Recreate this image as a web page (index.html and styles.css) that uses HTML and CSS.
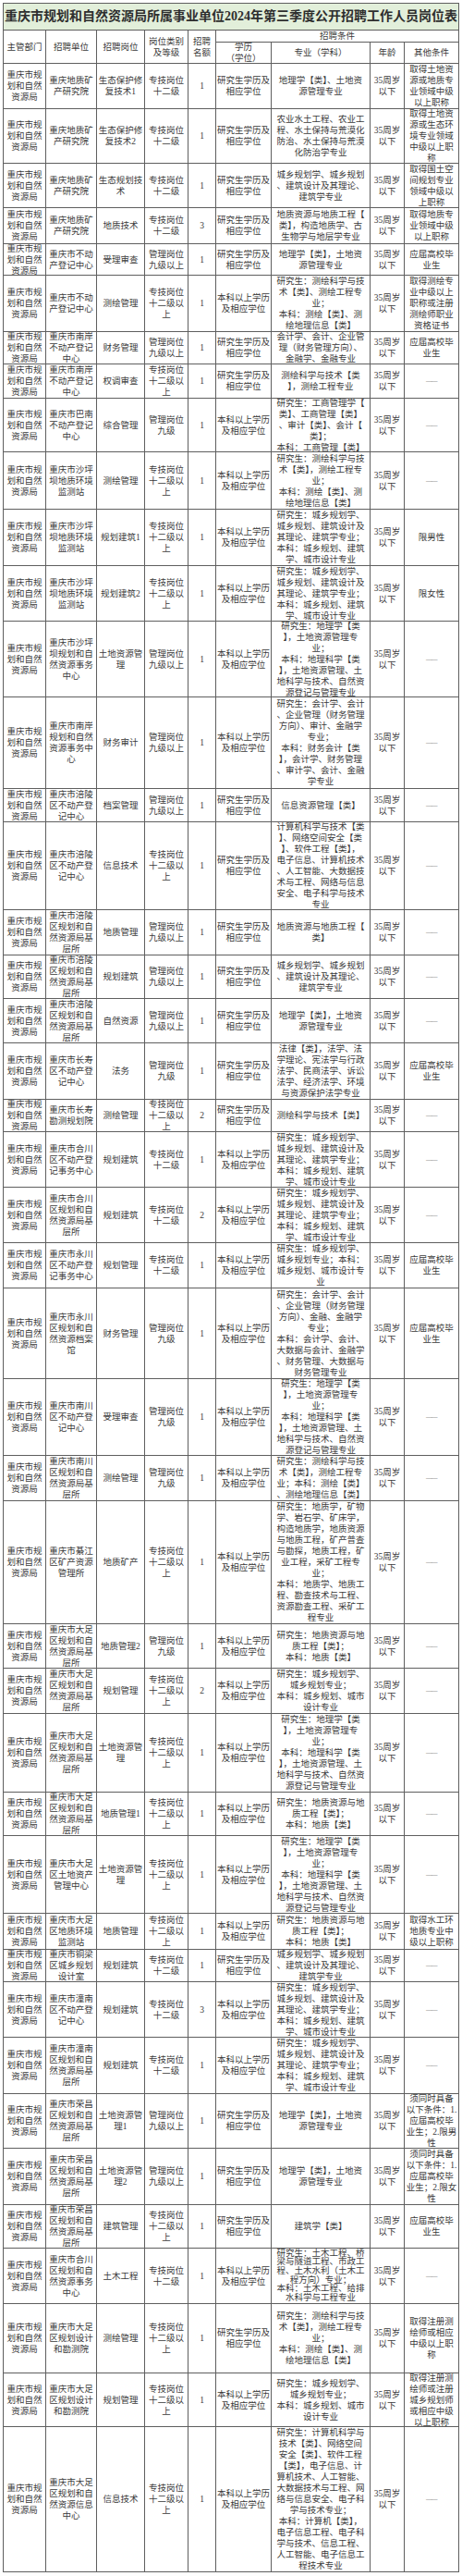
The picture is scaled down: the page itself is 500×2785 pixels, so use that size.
FILE: index.html
```html
<!DOCTYPE html>
<html lang="zh-CN">
<head>
<meta charset="utf-8">
<title>岗位表</title>
<link rel="stylesheet" href="styles.css">
</head>
<body>
<div class="sheet">
<div class="c title">重庆市规划和自然资源局所属事业单位2024年第三季度公开招聘工作人员岗位表</div>
<div class="c span2">主管部门</div>
<div class="c span2">招聘单位</div>
<div class="c span2">招聘岗位</div>
<div class="c span2">岗位类别及等级</div>
<div class="c span2">招聘名额</div>
<div class="c span4">招聘条件</div>
<div class="c nw"><span>学历<br>（学位）</span></div>
<div class="c">专业（学科）</div>
<div class="c">年龄</div>
<div class="c">其他条件</div>

<div class="c">重庆市规划和自然资源局</div><div class="c">重庆地质矿产研究院</div><div class="c">生态保护修复技术1</div><div class="c">专技岗位十二级</div><div class="c">1</div><div class="c">研究生学历及相应学位</div><div class="c nw"><span>地理学【类】、土地资<br>源管理专业</span></div><div class="c">35周岁以下</div><div class="c nw"><span>取得土地资<br>源或地质专<br>业领域中级<br>以上职称</span></div>

<div class="c">重庆市规划和自然资源局</div><div class="c">重庆地质矿产研究院</div><div class="c">生态保护修复技术2</div><div class="c">专技岗位十二级</div><div class="c">1</div><div class="c">研究生学历及相应学位</div><div class="c nw"><span>农业水土工程、农业工<br>程、水土保持与荒漠化<br>防治、水土保持与荒漠<br>化防治学专业</span></div><div class="c">35周岁以下</div><div class="c nw"><span>取得土地资<br>源或生态环<br>境专业领域<br>中级以上职<br>称</span></div>

<div class="c">重庆市规划和自然资源局</div><div class="c">重庆地质矿产研究院</div><div class="c">生态规划技术</div><div class="c">专技岗位十二级</div><div class="c">1</div><div class="c">研究生学历及相应学位</div><div class="c nw"><span>城乡规划学、城乡规划<br>、建筑设计及其理论、<br>建筑学专业</span></div><div class="c">35周岁以下</div><div class="c nw"><span>取得国土空<br>间规划专业<br>领域中级以<br>上职称</span></div>

<div class="c">重庆市规划和自然资源局</div><div class="c">重庆地质矿产研究院</div><div class="c">地质技术</div><div class="c">专技岗位十二级</div><div class="c">3</div><div class="c">研究生学历及相应学位</div><div class="c nw"><span>地质资源与地质工程【<br>类】，构造地质学、古<br>生物学与地层学专业</span></div><div class="c">35周岁以下</div><div class="c nw"><span>取得地质专<br>业领域中级<br>以上职称</span></div>

<div class="c">重庆市规划和自然资源局</div><div class="c">重庆市不动产登记中心</div><div class="c">受理审查</div><div class="c">管理岗位九级以上</div><div class="c">1</div><div class="c">研究生学历及相应学位</div><div class="c nw"><span>地理学【类】，土地资<br>源管理专业</span></div><div class="c">35周岁以下</div><div class="c nw"><span>应届高校毕<br>业生</span></div>

<div class="c">重庆市规划和自然资源局</div><div class="c">重庆市不动产登记中心</div><div class="c">测绘管理</div><div class="c">专技岗位十二级以上</div><div class="c">1</div><div class="c">本科以上学历及相应学位</div><div class="c nw"><span>研究生：测绘科学与技<br>术【类】、测绘工程专<br>业；<br>本科：测绘【类】、测<br>绘地理信息【类】</span></div><div class="c">35周岁以下</div><div class="c nw"><span>取得测绘专<br>业中级以上<br>职称或注册<br>测绘师职业<br>资格证书</span></div>

<div class="c">重庆市规划和自然资源局</div><div class="c">重庆市南岸不动产登记中心</div><div class="c">财务管理</div><div class="c">管理岗位九级以上</div><div class="c">1</div><div class="c">研究生学历及相应学位</div><div class="c nw"><span>会计学、会计、企业管<br>理（财务管理方向）、<br>金融学、金融专业</span></div><div class="c">35周岁以下</div><div class="c nw"><span>应届高校毕<br>业生</span></div>

<div class="c">重庆市规划和自然资源局</div><div class="c">重庆市南岸不动产登记中心</div><div class="c">权调审查</div><div class="c">专技岗位十二级以上</div><div class="c">1</div><div class="c">研究生学历及相应学位</div><div class="c nw"><span>测绘科学与技术【类<br>】，测绘工程专业</span></div><div class="c">35周岁以下</div><div class="c"><span class="dash">——</span></div>

<div class="c">重庆市规划和自然资源局</div><div class="c">重庆市巴南不动产登记中心</div><div class="c">综合管理</div><div class="c">管理岗位九级</div><div class="c">1</div><div class="c">本科以上学历及相应学位</div><div class="c nw"><span>研究生：工商管理学【<br>类】、工商管理【类】<br>、审计【类】、会计【<br>类】；<br>本科：工商管理【类】</span></div><div class="c">35周岁以下</div><div class="c"><span class="dash">——</span></div>

<div class="c">重庆市规划和自然资源局</div><div class="c">重庆市沙坪坝地质环境监测站</div><div class="c">测绘管理</div><div class="c">专技岗位十二级以上</div><div class="c">1</div><div class="c">本科以上学历及相应学位</div><div class="c nw"><span>研究生：测绘科学与技<br>术【类】，测绘工程专<br>业；<br>本科：测绘【类】、测<br>绘地理信息【类】</span></div><div class="c">35周岁以下</div><div class="c"><span class="dash">——</span></div>

<div class="c">重庆市规划和自然资源局</div><div class="c">重庆市沙坪坝地质环境监测站</div><div class="c">规划建筑1</div><div class="c">专技岗位十二级以上</div><div class="c">1</div><div class="c">本科以上学历及相应学位</div><div class="c nw"><span>研究生：城乡规划学、<br>城乡规划、建筑设计及<br>其理论、建筑学专业；<br>本科：城乡规划、建筑<br>学、城市设计专业</span></div><div class="c">35周岁以下</div><div class="c">限男性</div>

<div class="c">重庆市规划和自然资源局</div><div class="c">重庆市沙坪坝地质环境监测站</div><div class="c">规划建筑2</div><div class="c">专技岗位十二级以上</div><div class="c">1</div><div class="c">本科以上学历及相应学位</div><div class="c nw"><span>研究生：城乡规划学、<br>城乡规划、建筑设计及<br>其理论、建筑学专业；<br>本科：城乡规划、建筑<br>学、城市设计专业</span></div><div class="c">35周岁以下</div><div class="c">限女性</div>

<div class="c">重庆市规划和自然资源局</div><div class="c">重庆市沙坪坝规划和自然资源事务中心</div><div class="c">土地资源管理</div><div class="c">管理岗位九级以上</div><div class="c">1</div><div class="c">本科以上学历及相应学位</div><div class="c nw"><span>研究生：地理学【类<br>】，土地资源管理专<br>业；<br>本科：地理科学【类<br>】，土地资源管理、土<br>地科学与技术、自然资<br>源登记与管理专业</span></div><div class="c">35周岁以下</div><div class="c"><span class="dash">——</span></div>

<div class="c">重庆市规划和自然资源局</div><div class="c">重庆市南岸规划和自然资源事务中心</div><div class="c">财务审计</div><div class="c">管理岗位九级以上</div><div class="c">1</div><div class="c">本科以上学历及相应学位</div><div class="c nw"><span>研究生：会计学、会计<br>、企业管理（财务管理<br>方向）、审计、金融学<br>专业；<br>本科：财务会计【类<br>】，会计学、财务管理<br>、审计学、会计、金融<br>学专业</span></div><div class="c">35周岁以下</div><div class="c"><span class="dash">——</span></div>

<div class="c">重庆市规划和自然资源局</div><div class="c">重庆市涪陵区不动产登记中心</div><div class="c">档案管理</div><div class="c">管理岗位九级以上</div><div class="c">1</div><div class="c">研究生学历及相应学位</div><div class="c nw"><span>信息资源管理【类】</span></div><div class="c">35周岁以下</div><div class="c"><span class="dash">——</span></div>

<div class="c">重庆市规划和自然资源局</div><div class="c">重庆市涪陵区不动产登记中心</div><div class="c">信息技术</div><div class="c">专技岗位十二级以上</div><div class="c">1</div><div class="c">研究生学历及相应学位</div><div class="c nw"><span>计算机科学与技术【类<br>】、网络空间安全【类<br>】、软件工程【类】，<br>电子信息、计算机技术<br>、人工智能、大数据技<br>术与工程、网络与信息<br>安全、电子科学与技术<br>专业</span></div><div class="c">35周岁以下</div><div class="c"><span class="dash">——</span></div>

<div class="c">重庆市规划和自然资源局</div><div class="c">重庆市涪陵区规划和自然资源局基层所</div><div class="c">地质管理</div><div class="c">管理岗位九级以上</div><div class="c">1</div><div class="c">研究生学历及相应学位</div><div class="c nw"><span>地质资源与地质工程【<br>类】</span></div><div class="c">35周岁以下</div><div class="c"><span class="dash">——</span></div>

<div class="c">重庆市规划和自然资源局</div><div class="c">重庆市涪陵区规划和自然资源局基层所</div><div class="c">规划建筑</div><div class="c">管理岗位九级以上</div><div class="c">1</div><div class="c">研究生学历及相应学位</div><div class="c nw"><span>城乡规划学、城乡规划<br>、建筑设计及其理论、<br>建筑学专业</span></div><div class="c">35周岁以下</div><div class="c"><span class="dash">——</span></div>

<div class="c">重庆市规划和自然资源局</div><div class="c">重庆市涪陵区规划和自然资源局基层所</div><div class="c">自然资源</div><div class="c">管理岗位九级以上</div><div class="c">1</div><div class="c">研究生学历及相应学位</div><div class="c nw"><span>地理学【类】，土地资<br>源管理专业</span></div><div class="c">35周岁以下</div><div class="c"><span class="dash">——</span></div>

<div class="c">重庆市规划和自然资源局</div><div class="c">重庆市长寿区不动产登记中心</div><div class="c">法务</div><div class="c">管理岗位九级</div><div class="c">1</div><div class="c">研究生学历及相应学位</div><div class="c nw"><span>法律【类】，法学、法<br>学理论、宪法学与行政<br>法学、民商法学、诉讼<br>法学、经济法学、环境<br>与资源保护法学专业</span></div><div class="c">35周岁以下</div><div class="c nw"><span>应届高校毕<br>业生</span></div>

<div class="c">重庆市规划和自然资源局</div><div class="c">重庆市长寿勘测规划院</div><div class="c">测绘管理</div><div class="c">专技岗位十二级以上</div><div class="c">2</div><div class="c">研究生学历及相应学位</div><div class="c nw"><span>测绘科学与技术【类】</span></div><div class="c">35周岁以下</div><div class="c"><span class="dash">——</span></div>

<div class="c">重庆市规划和自然资源局</div><div class="c">重庆市合川区不动产登记事务中心</div><div class="c">规划建筑</div><div class="c">专技岗位十二级</div><div class="c">1</div><div class="c">本科以上学历及相应学位</div><div class="c nw"><span>研究生：城乡规划学、<br>城乡规划、建筑设计及<br>其理论、建筑学专业；<br>本科：城乡规划、建筑<br>学、城市设计专业</span></div><div class="c">35周岁以下</div><div class="c"><span class="dash">——</span></div>

<div class="c">重庆市规划和自然资源局</div><div class="c">重庆市合川区规划和自然资源局基层所</div><div class="c">规划建筑</div><div class="c">专技岗位十二级</div><div class="c">2</div><div class="c">本科以上学历及相应学位</div><div class="c nw"><span>研究生：城乡规划学、<br>城乡规划、建筑设计及<br>其理论、建筑学专业；<br>本科：城乡规划、建筑<br>学、城市设计专业</span></div><div class="c">35周岁以下</div><div class="c"><span class="dash">——</span></div>

<div class="c">重庆市规划和自然资源局</div><div class="c">重庆市永川区不动产登记事务中心</div><div class="c">规划管理</div><div class="c">专技岗位十二级</div><div class="c">1</div><div class="c">本科以上学历及相应学位</div><div class="c nw"><span>研究生：城乡规划学、<br>城乡规划专业；本科：<br>城乡规划、城市设计专<br>业</span></div><div class="c">35周岁以下</div><div class="c nw"><span>应届高校毕<br>业生</span></div>

<div class="c">重庆市规划和自然资源局</div><div class="c">重庆市永川区规划和自然资源档案馆</div><div class="c">财务管理</div><div class="c">管理岗位九级</div><div class="c">1</div><div class="c">本科以上学历及相应学位</div><div class="c nw"><span>研究生：会计学、会计<br>、企业管理（财务管理<br>方向）、金融、金融学<br>专业；<br>本科：会计学、会计、<br>大数据与会计、金融学<br>、财务管理、大数据与<br>财务管理专业</span></div><div class="c">35周岁以下</div><div class="c nw"><span>应届高校毕<br>业生</span></div>

<div class="c">重庆市规划和自然资源局</div><div class="c">重庆市南川区不动产登记中心</div><div class="c">受理审查</div><div class="c">管理岗位九级</div><div class="c">1</div><div class="c">本科以上学历及相应学位</div><div class="c nw"><span>研究生：地理学【类<br>】，土地资源管理专<br>业；<br>本科：地理科学【类<br>】，土地资源管理、土<br>地科学与技术、自然资<br>源登记与管理专业</span></div><div class="c">35周岁以下</div><div class="c"><span class="dash">——</span></div>

<div class="c">重庆市规划和自然资源局</div><div class="c">重庆市南川区规划和自然资源局基层所</div><div class="c">测绘管理</div><div class="c">管理岗位九级</div><div class="c">1</div><div class="c">本科以上学历及相应学位</div><div class="c nw"><span>研究生：测绘科学与技<br>术【类】，测绘工程专<br>业；本科：测绘【类】<br>、测绘地理信息【类】</span></div><div class="c">35周岁以下</div><div class="c"><span class="dash">——</span></div>

<div class="c">重庆市规划和自然资源局</div><div class="c">重庆市綦江区矿产资源管理所</div><div class="c">地质矿产</div><div class="c">专技岗位十二级以上</div><div class="c">1</div><div class="c">本科以上学历及相应学位</div><div class="c nw"><span>研究生：地质学，矿物<br>学、岩石学、矿床学，<br>构造地质学，地质资源<br>与地质工程，矿产普查<br>与勘探，地质工程，矿<br>业工程，采矿工程专<br>业；<br>本科：地质学、地质工<br>程、勘查技术与工程、<br>资源勘查工程、采矿工<br>程专业</span></div><div class="c">35周岁以下</div><div class="c"><span class="dash">——</span></div>

<div class="c">重庆市规划和自然资源局</div><div class="c">重庆市大足区规划和自然资源局基层所</div><div class="c">地质管理2</div><div class="c">管理岗位九级</div><div class="c">1</div><div class="c">本科以上学历及相应学位</div><div class="c nw"><span>研究生：地质资源与地<br>质工程【类】；<br>本科：地质【类】</span></div><div class="c">35周岁以下</div><div class="c"><span class="dash">——</span></div>

<div class="c">重庆市规划和自然资源局</div><div class="c">重庆市大足区规划和自然资源局基层所</div><div class="c">规划管理</div><div class="c">专技岗位十二级以上</div><div class="c">2</div><div class="c">本科以上学历及相应学位</div><div class="c nw"><span>研究生：城乡规划学、<br>城乡规划专业；<br>本科：城乡规划、城市<br>设计专业</span></div><div class="c">35周岁以下</div><div class="c"><span class="dash">——</span></div>

<div class="c">重庆市规划和自然资源局</div><div class="c">重庆市大足区规划和自然资源局基层所</div><div class="c">土地资源管理</div><div class="c">专技岗位十二级以上</div><div class="c">1</div><div class="c">本科以上学历及相应学位</div><div class="c nw"><span>研究生：地理学【类<br>】，土地资源管理专<br>业；<br>本科：地理科学【类<br>】，土地资源管理、土<br>地科学与技术、自然资<br>源登记与管理专业</span></div><div class="c">35周岁以下</div><div class="c"><span class="dash">——</span></div>

<div class="c">重庆市规划和自然资源局</div><div class="c">重庆市大足区规划和自然资源局基层所</div><div class="c">地质管理1</div><div class="c">专技岗位十二级以上</div><div class="c">1</div><div class="c">本科以上学历及相应学位</div><div class="c nw"><span>研究生：地质资源与地<br>质工程【类】；<br>本科：地质【类】</span></div><div class="c">35周岁以下</div><div class="c"><span class="dash">——</span></div>

<div class="c">重庆市规划和自然资源局</div><div class="c">重庆市大足区土地资产管理中心</div><div class="c">土地资源管理</div><div class="c">专技岗位十二级以上</div><div class="c">1</div><div class="c">本科以上学历及相应学位</div><div class="c nw"><span>研究生：地理学【类<br>】，土地资源管理专<br>业；<br>本科：地理科学【类<br>】，土地资源管理、土<br>地科学与技术、自然资<br>源登记与管理专业</span></div><div class="c">35周岁以下</div><div class="c"><span class="dash">——</span></div>

<div class="c">重庆市规划和自然资源局</div><div class="c">重庆市大足区地质环境监测站</div><div class="c">地质管理</div><div class="c">专技岗位十二级以上</div><div class="c">1</div><div class="c">本科以上学历及相应学位</div><div class="c nw"><span>研究生：地质资源与地<br>质工程【类】；<br>本科：地质【类】</span></div><div class="c">35周岁以下</div><div class="c nw"><span>取得水工环<br>地质专业中<br>级以上职称</span></div>

<div class="c">重庆市规划和自然资源局</div><div class="c">重庆市铜梁区城乡规划设计室</div><div class="c">规划建筑</div><div class="c">专技岗位十二级</div><div class="c">1</div><div class="c">研究生学历及相应学位</div><div class="c nw"><span>城乡规划学、城乡规划<br>、建筑设计及其理论、<br>建筑学专业</span></div><div class="c">35周岁以下</div><div class="c"><span class="dash">——</span></div>

<div class="c">重庆市规划和自然资源局</div><div class="c">重庆市潼南区不动产登记中心</div><div class="c">规划建筑</div><div class="c">专技岗位十二级</div><div class="c">3</div><div class="c">本科以上学历及相应学位</div><div class="c nw"><span>研究生：城乡规划学、<br>城乡规划、建筑设计及<br>其理论、建筑学专业；<br>本科：城乡规划、建筑<br>学、城市设计专业</span></div><div class="c">35周岁以下</div><div class="c"><span class="dash">——</span></div>

<div class="c">重庆市规划和自然资源局</div><div class="c">重庆市潼南区规划和自然资源局基层所</div><div class="c">规划建筑</div><div class="c">专技岗位十二级</div><div class="c">1</div><div class="c">本科以上学历及相应学位</div><div class="c nw"><span>研究生：城乡规划学、<br>城乡规划、建筑设计及<br>其理论、建筑学专业；<br>本科：城乡规划、建筑<br>学、城市设计专业</span></div><div class="c">35周岁以下</div><div class="c"><span class="dash">——</span></div>

<div class="c">重庆市规划和自然资源局</div><div class="c">重庆市荣昌区规划和自然资源局基层所</div><div class="c">土地资源管理1</div><div class="c">管理岗位九级以上</div><div class="c">1</div><div class="c">研究生学历及相应学位</div><div class="c nw"><span>地理学【类】，土地资<br>源管理专业</span></div><div class="c">35周岁以下</div><div class="c nw"><span>须同时具备<br>以下条件：1.<br>应届高校毕<br>业生；2.限男<br>性</span></div>

<div class="c">重庆市规划和自然资源局</div><div class="c">重庆市荣昌区规划和自然资源局基层所</div><div class="c">土地资源管理2</div><div class="c">管理岗位九级以上</div><div class="c">1</div><div class="c">研究生学历及相应学位</div><div class="c nw"><span>地理学【类】，土地资<br>源管理专业</span></div><div class="c">35周岁以下</div><div class="c nw"><span>须同时具备<br>以下条件：1.<br>应届高校毕<br>业生；2.限女<br>性</span></div>

<div class="c">重庆市规划和自然资源局</div><div class="c">重庆市荣昌区规划和自然资源局基层所</div><div class="c">建筑管理</div><div class="c">专技岗位十二级以上</div><div class="c">1</div><div class="c">研究生学历及相应学位</div><div class="c nw"><span>建筑学【类】</span></div><div class="c">35周岁以下</div><div class="c nw"><span>应届高校毕<br>业生</span></div>

<div class="c">重庆市规划和自然资源局</div><div class="c">重庆市合川区规划和自然资源事务中心</div><div class="c">土木工程</div><div class="c">专技岗位十二级</div><div class="c">1</div><div class="c">本科以上学历及相应学位</div><div class="c nw tight"><span>研究生：土木工程、桥<br>梁与隧道工程、市政工<br>程、土木水利（土木工<br>程方向）专业；<br>本科：土木工程、给排<br>水科学与工程专业</span></div><div class="c">35周岁以下</div><div class="c"><span class="dash">——</span></div>

<div class="c">重庆市规划和自然资源局</div><div class="c">重庆市大足区规划设计和勘测院</div><div class="c">测绘管理</div><div class="c">专技岗位十二级以上</div><div class="c">1</div><div class="c">研究生学历及相应学位</div><div class="c nw"><span>研究生：测绘科学与技<br>术【类】，测绘工程专<br>业；<br>本科：测绘【类】、测<br>绘地理信息【类】</span></div><div class="c">35周岁以下</div><div class="c nw"><span>取得注册测<br>绘师或相应<br>中级以上职<br>称</span></div>

<div class="c">重庆市规划和自然资源局</div><div class="c">重庆市大足区规划设计和勘测院</div><div class="c">规划管理</div><div class="c">专技岗位十二级以上</div><div class="c">1</div><div class="c">本科以上学历及相应学位</div><div class="c nw"><span>研究生：城乡规划学、<br>城乡规划专业；<br>本科：城乡规划、城市<br>设计专业</span></div><div class="c">35周岁以下</div><div class="c nw"><span>取得注册测<br>绘师或注册<br>城乡规划师<br>或相应中级<br>以上职称</span></div>

<div class="c">重庆市规划和自然资源局</div><div class="c">重庆市大足区规划和自然资源信息中心</div><div class="c">信息技术</div><div class="c">专技岗位十二级以上</div><div class="c">1</div><div class="c">本科以上学历及相应学位</div><div class="c nw"><span>研究生：计算机科学与<br>技术【类】、网络空间<br>安全【类】、软件工程<br>【类】，电子信息、计<br>算机技术、人工智能、<br>大数据技术与工程、网<br>络与信息安全、电子科<br>学与技术专业；<br>本科：计算机【类】，<br>电子信息工程、电子科<br>学与技术、信息工程、<br>人工智能、电子信息工<br>程技术专业</span></div><div class="c">35周岁以下</div><div class="c"><span class="dash">——</span></div>
</div>
</body>
</html>
```

FILE: styles.css
```css
html, body {
  margin: 0;
  padding: 0;
  background: #ffffff;
}

body {
  font-family: "Liberation Serif", "Noto Sans CJK SC", serif;
  font-size: 9.5px;
  line-height: 12px;
  color: #3a3a3a;
}

.sheet {
  box-sizing: border-box;
  width: 494px;
  margin: 3px 3px 0;
  padding: 1px;
  display: grid;
  gap: 1px;
  background: #5f5f5f;
  grid-template-columns: 45px 54px 51px 46px 29px 59px 106px 36px 58px;
  grid-template-rows:
    28px 12px 22px
    48px 58px 47px 38px 33px 60px 34px 36px 57px 61px
    60px 59px 81px 98px 35px 94px 48px 46px 47px 60px
    34px 59px 59px 48px 97px 82px 48px 132px 47px 48px
    84px 46px 83px 38px 34px 59px 60px 58px 60px 46px
    59px 74px 57px 156px;
}

.c {
  background: #ffffff;
  display: flex;
  align-items: center;
  justify-content: center;
  text-align: center;
  overflow: hidden;
  padding: 0 1px;
  min-width: 0;
  min-height: 0;
}

.nw span {
  white-space: nowrap;
}

.tight {
  line-height: 9.6px;
}

.title {
  grid-column: 1 / -1;
  background: #e2efda;
  font-size: 14px;
  line-height: 16px;
  font-weight: bold;
  color: #2e2e2e;
  white-space: nowrap;
  padding: 0;
}

.span2 {
  grid-row: span 2;
}

.span4 {
  grid-column: span 4;
}

.dash {
  font-size: 6.5px;
  letter-spacing: -0.5px;
  color: #444444;
}
```
